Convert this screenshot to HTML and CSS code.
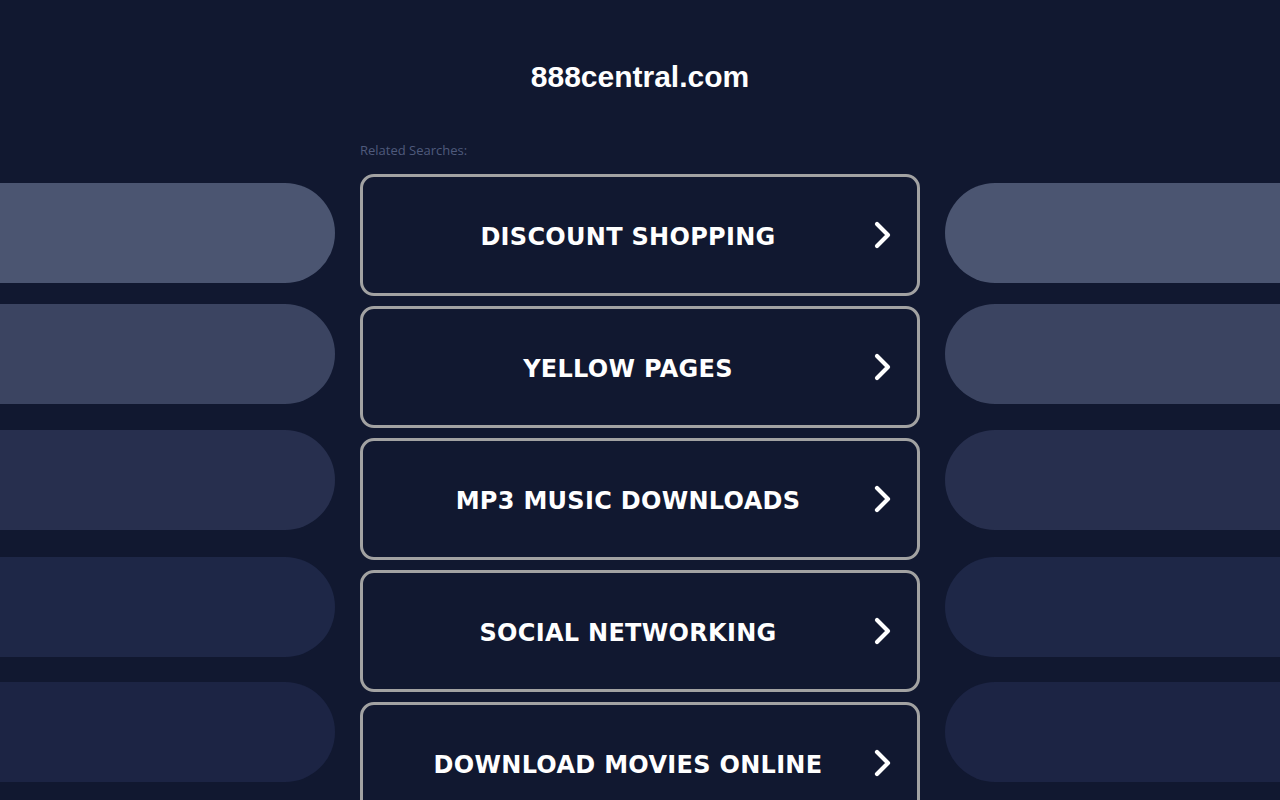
FILE: index.html
```html
<!DOCTYPE html>
<html lang="en">
<head>
<meta charset="utf-8">
<title>888central.com</title>
<link rel="stylesheet" href="styles.css">
</head>
<body>
<div class="page">
  <div class="side side-left">
    <div class="pill p1"></div>
    <div class="pill p2"></div>
    <div class="pill p3"></div>
    <div class="pill p4"></div>
    <div class="pill p5"></div>
  </div>
  <main class="center">
    <h1 class="domain">888central.com</h1>
    <div class="related">Related Searches:</div>
    <ul class="links">
      <li><a class="link" href="#"><span class="label">DISCOUNT SHOPPING</span><svg class="chev" viewBox="0 0 20 30" width="20" height="30"><path d="M4 4 L15 15 L4 26" fill="none" stroke="#fff" stroke-width="4.2" stroke-linecap="round" stroke-linejoin="round"/></svg></a></li>
      <li><a class="link" href="#"><span class="label">YELLOW PAGES</span><svg class="chev" viewBox="0 0 20 30" width="20" height="30"><path d="M4 4 L15 15 L4 26" fill="none" stroke="#fff" stroke-width="4.2" stroke-linecap="round" stroke-linejoin="round"/></svg></a></li>
      <li><a class="link" href="#"><span class="label">MP3 MUSIC DOWNLOADS</span><svg class="chev" viewBox="0 0 20 30" width="20" height="30"><path d="M4 4 L15 15 L4 26" fill="none" stroke="#fff" stroke-width="4.2" stroke-linecap="round" stroke-linejoin="round"/></svg></a></li>
      <li><a class="link" href="#"><span class="label">SOCIAL NETWORKING</span><svg class="chev" viewBox="0 0 20 30" width="20" height="30"><path d="M4 4 L15 15 L4 26" fill="none" stroke="#fff" stroke-width="4.2" stroke-linecap="round" stroke-linejoin="round"/></svg></a></li>
      <li><a class="link" href="#"><span class="label">DOWNLOAD MOVIES ONLINE</span><svg class="chev" viewBox="0 0 20 30" width="20" height="30"><path d="M4 4 L15 15 L4 26" fill="none" stroke="#fff" stroke-width="4.2" stroke-linecap="round" stroke-linejoin="round"/></svg></a></li>
    </ul>
  </main>
  <div class="side side-right">
    <div class="pill p1"></div>
    <div class="pill p2"></div>
    <div class="pill p3"></div>
    <div class="pill p4"></div>
    <div class="pill p5"></div>
  </div>
</div>
</body>
</html>
```
FILE: styles.css
```css
html, body {
  margin: 0;
  padding: 0;
  height: 100%;
  overflow: hidden;
  background: #111830;
}
body {
  font-family: "Liberation Sans", Arial, sans-serif;
  color: #fff;
}
.page {
  display: flex;
  gap: 25px;
  width: 1280px;
  height: 800px;
}
.side {
  width: 335px;
  flex: none;
  display: flex;
  flex-direction: column;
  padding-top: 183px;
}
.pill {
  height: 100px;
  flex: none;
}
.side-left .pill { border-radius: 0 50px 50px 0; }
.side-right .pill { border-radius: 50px 0 0 50px; }
.p1 { background: #4b5571; }
.p2 { background: #3b4461; margin-top: 21px; }
.p3 { background: #272f4e; margin-top: 26px; }
.p4 { background: #1e2747; margin-top: 27px; }
.p5 { background: #1c2444; margin-top: 25px; }
.center {
  width: 560px;
  flex: none;
  display: flex;
  flex-direction: column;
}
.domain {
  margin: 59px 0 0;
  height: 36px;
  line-height: 36px;
  font-size: 30px;
  font-weight: bold;
  text-align: center;
  color: #fff;
}
.related {
  margin-top: 47px;
  font-family: "Open Sans", sans-serif;
  font-size: 13px;
  line-height: 16px;
  color: #4f5a7c;
}
.links {
  list-style: none;
  margin: 16px 0 0;
  padding: 0;
  display: flex;
  flex-direction: column;
  gap: 10px;
}
.link {
  display: flex;
  align-items: center;
  height: 116px;
  border: 3px solid #a2a2a2;
  border-radius: 14px;
  text-decoration: none;
  color: #fff;
  padding: 0 24px 0 0;
}
.label {
  flex: 1;
  padding: 4px 0 0 20px;
  text-align: center;
  font-family: "DejaVu Sans", Verdana, sans-serif;
  font-weight: bold;
  font-size: 24px;
  letter-spacing: 0.3px;
}
.chev {
  flex: none;
  display: block;
}
```
